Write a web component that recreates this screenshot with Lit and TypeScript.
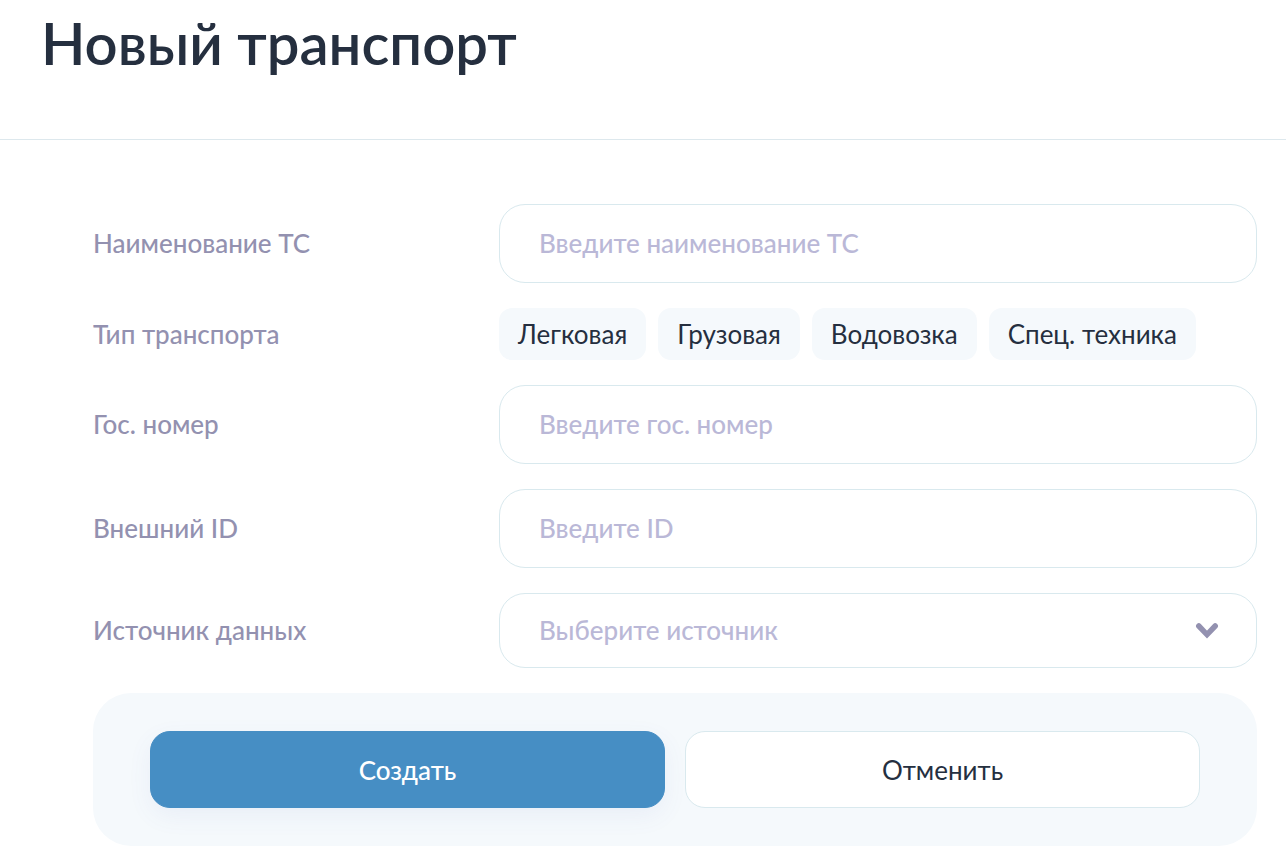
import { css, html, LitElement } from "lit";

const TYPES = ["Легковая", "Грузовая", "Водовозка", "Спец. техника"];

class AppRoot extends LitElement {
    static override properties = {
        type: { state: true },
    };

    static override styles = css`
        :host {
            display: block;
            background: #ffffff;
            color: #252f3f;
            font-family: Lato, "Liberation Sans", sans-serif;
            font-size: 26px;
            line-height: 30px;
        }

        * {
            box-sizing: border-box;
        }

        header {
            padding: 8px 41px 61px;
            border-bottom: 1px solid #dde8ed;
        }

        h1 {
            margin: 0;
            font-size: 58px;
            line-height: 70px;
            font-weight: 600;
        }

        form {
            display: grid;
            gap: 25px;
            padding: 64px 29px 21px 93px;
        }

        .row {
            display: grid;
            grid-template-columns: 406px 1fr;
            align-items: center;
        }

        .label {
            padding-bottom: 1px;
            color: #9391b0;
            font-weight: 500;
        }

        .field {
            display: block;
            width: 100%;
            height: 79px;
            padding: 0 39px 1px;
            border: 1px solid #d9e9ee;
            border-radius: 26px;
            background: #ffffff;
            color: #252f3f;
            font: inherit;
            font-weight: 500;
            outline: none;
        }

        .field::placeholder {
            color: #bab8d7;
            opacity: 1;
        }

        .select {
            display: grid;
            align-items: center;
        }

        .select > * {
            grid-area: 1 / 1;
        }

        .select .field {
            height: 75px;
            appearance: none;
            color: #bab8d7;
        }

        .select svg {
            justify-self: end;
            margin-right: 38px;
            pointer-events: none;
        }

        .chips {
            display: flex;
            flex-wrap: wrap;
            gap: 12px;
        }

        button {
            font: inherit;
            color: #252f3f;
            cursor: pointer;
        }

        .chip {
            height: 52px;
            padding: 0 19px;
            border: 0;
            border-radius: 13px;
            background: #f5f9fc;
        }

        .chip[aria-pressed="true"] {
            background: #d9e9ee;
        }

        .actions {
            display: grid;
            grid-template-columns: 1fr 1fr;
            gap: 20px;
            padding: 38px 57px;
            border-radius: 38px;
            background: #f5f9fc;
        }

        .action {
            height: 77px;
            border: 1px solid #d9e9ee;
            border-radius: 20px;
            background: #ffffff;
        }

        .primary {
            border-color: #468ec4;
            background: #468ec4;
            color: #ffffff;
            font-weight: 500;
            box-shadow: 0 8px 24px rgba(80, 100, 190, 0.07);
        }
    `;

    declare type: string;

    constructor() {
        super();
        this.type = "";
    }

    private renderInput(id: string, label: string, placeholder: string) {
        return html`
            <div class="row">
                <label class="label" for="${id}">${label}</label>
                <input class="field" id="${id}" type="text" placeholder="${placeholder}" />
            </div>
        `;
    }

    override render() {
        return html`
            <header>
                <h1>Новый транспорт</h1>
            </header>
            <form @submit="${(e: Event) => e.preventDefault()}">
                ${this.renderInput("name", "Наименование ТС", "Введите наименование ТС")}
                <div class="row" role="group" aria-labelledby="type-label">
                    <span class="label" id="type-label">Тип транспорта</span>
                    <div class="chips">
                        ${TYPES.map((type) => html`
                            <button
                                class="chip"
                                type="button"
                                aria-pressed="${this.type === type}"
                                @click="${() => (this.type = type)}"
                            >${type}</button>
                        `)}
                    </div>
                </div>
                ${this.renderInput("number", "Гос. номер", "Введите гос. номер")}
                ${this.renderInput("external-id", "Внешний ID", "Введите ID")}
                <div class="row">
                    <label class="label" for="source">Источник данных</label>
                    <div class="select">
                        <select class="field" id="source">
                            <option value="">Выберите источник</option>
                        </select>
                        <svg width="24" height="18" viewBox="0 0 24 18" fill="none" aria-hidden="true">
                            <path
                                d="M3.800 4L12 12.600L20.200 4"
                                stroke="#9391b0"
                                stroke-width="5.500"
                                stroke-linecap="round"
                            />
                        </svg>
                    </div>
                </div>
                <div class="actions">
                    <button class="action primary" type="submit">Создать</button>
                    <button class="action" type="reset">Отменить</button>
                </div>
            </form>
        `;
    }
}

customElements.define("app-root", AppRoot);
